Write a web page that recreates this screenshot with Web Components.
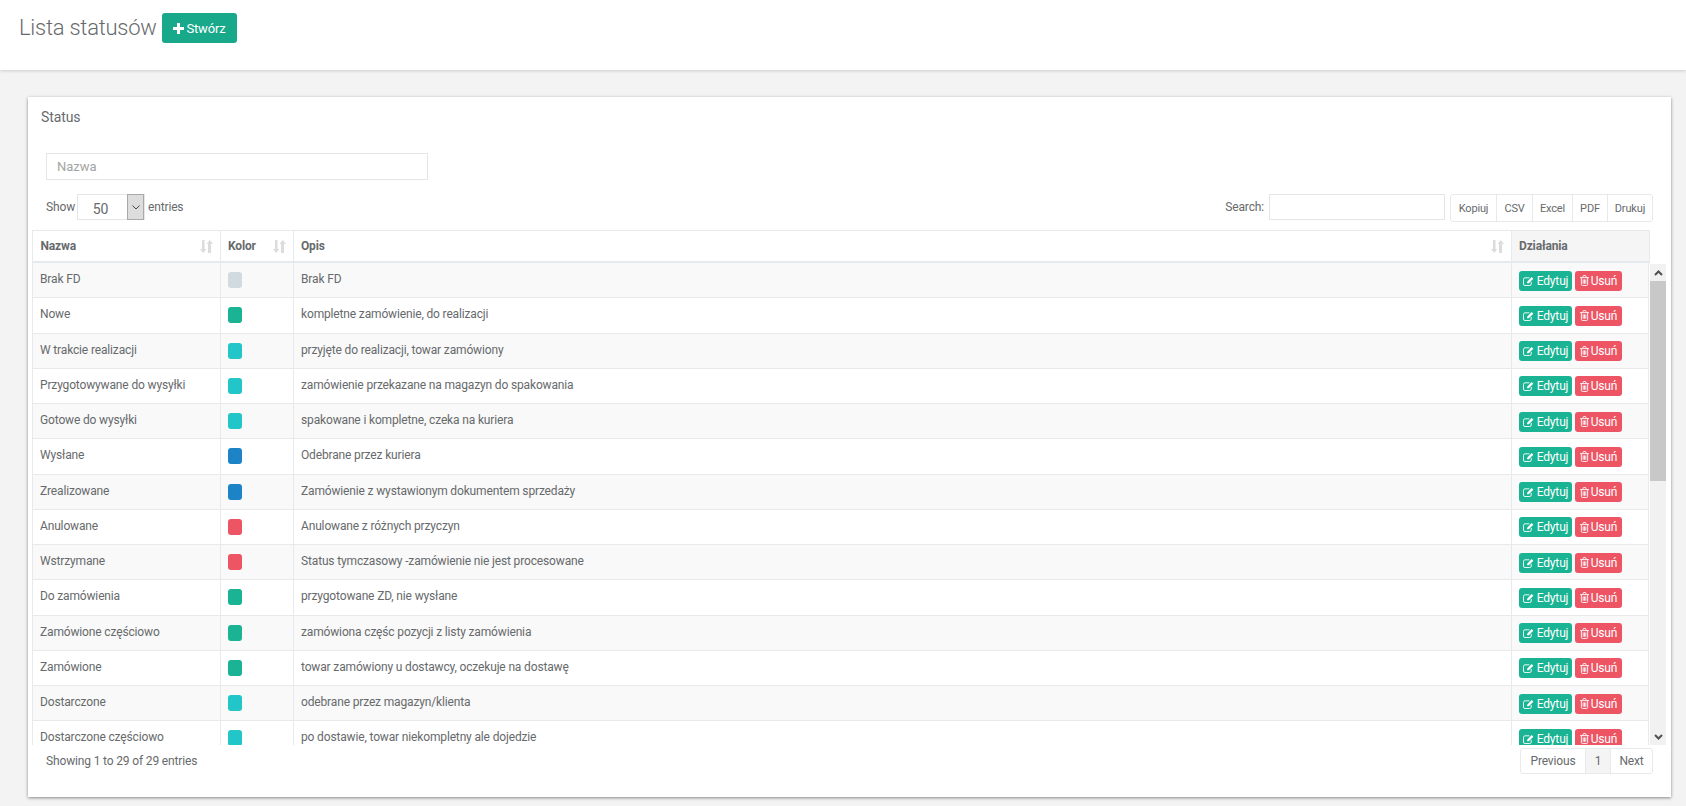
<!DOCTYPE html>
<html lang="pl">
<head>
<meta charset="utf-8">
<title>Lista statusów</title>
<style>
  html, body { margin: 0; height: 100%; overflow: hidden; }
  body { background: #f3f3f4; font-family: Roboto, "Open Sans", sans-serif; font-size: 12px; letter-spacing: -0.15px; color: #676a6c; }
</style>
</head>
<body>
<status-page></status-page>

<script>
const ICONS = {
  plus: '<svg width="11" height="11" viewBox="0 0 11 11"><path fill="currentColor" d="M4 0h3v4h4v3H7v4H4V7H0V4h4z"/></svg>',
  edit: '<svg width="11" height="10" viewBox="0 0 12 11"><path fill="none" stroke="currentColor" stroke-width="1" d="M9 6.500v2.300A1.700 1.700 0 0 1 7.300 10.500H2.200A1.700 1.700 0 0 1 .5 8.800V3.700A1.700 1.700 0 0 1 2.200 2H7"/><path fill="currentColor" d="M4.500 6.200 9.500 1.200 11.300 3 6.300 8H4.500z"/></svg>',
  trash: '<svg width="9" height="11" viewBox="0 0 10 12"><path fill="none" stroke="currentColor" stroke-width="1" d="M0 2.800h10M1.500 2.800v7.700c0 .6.400 1 1 1h5c.6 0 1-.4 1-1V2.800M3.300 2.800V1.300c0-.4.300-.8.800-.8h1.800c.5 0 .8.400.8.800v1.500M3.500 4.800v4.800M5 4.800v4.800M6.500 4.800v4.800"/></svg>',
  sort: '<svg width="13" height="13" viewBox="0 0 13 13"><path fill="#dcdcdc" d="M2 0h2.500v9H6.300L3.250 13 0 9h2zM8 13V4H6.500L9.750 0 13 4h-2v9z"/></svg>'
};

class ActionButton extends HTMLElement {
  constructor() {
    super();
    const icon = ICONS[this.getAttribute('icon')] || '';
    this.attachShadow({ mode: 'open' }).innerHTML = `
      <style>
        :host { display: inline-flex; align-items: center; justify-content: center; gap: var(--gap, 3px);
          box-sizing: border-box; border-radius: 3px; color: #fff; background: var(--bg, #1ab394);
          height: var(--h, 20px); width: var(--w, auto); font-size: var(--fs, 12px); white-space: nowrap; }
        svg { display: block; }
      </style>${icon}<slot></slot>`;
  }
}
customElements.define('action-button', ActionButton);

class TopBar extends HTMLElement {
  constructor() {
    super();
    this.attachShadow({ mode: 'open' }).innerHTML = `
      <style>
        :host { display: flex; align-items: flex-start; gap: 6px; box-sizing: border-box; height: 70px;
          padding: 13px 0 0 19px; background: #fff; box-shadow: 0 1px 3px rgba(0,0,0,.16); position: relative; }
        h2 { margin: 0; width: 137px; white-space: nowrap; font: 300 22px/30px Roboto, sans-serif; color: #676a6c; letter-spacing: -.25px; }
        action-button { --w: 75px; --h: 30px; --fs: 13px; --gap: 2px; --bg: #18a98b; }
      </style>
      <h2>Lista statusów</h2>
      <action-button icon="plus">Stwórz</action-button>`;
  }
}
customElements.define('top-bar', TopBar);

class StatusRow extends HTMLElement {
  constructor() {
    super();
    const name = this.getAttribute('name');
    const color = this.getAttribute('color');
    const desc = this.getAttribute('desc');
    this.attachShadow({ mode: 'open' }).innerHTML = `
      <style>
        :host { display: grid; grid-template-columns: 188px 73px 1218px 138px; box-sizing: border-box;
          height: 35.25px; border-bottom: 1px solid #e7eaec; }
        :host(:nth-child(odd)) { background: #f9f9f9; }
        div { display: flex; align-items: center; box-sizing: border-box; padding: 0 0 2px 7px;
          border-left: 1px solid #e7eaec; white-space: nowrap; }
        div:first-child { padding-left: 7.500px; }
        .actions { gap: 3px; padding: 1px 0 0 7px; border-right: 1px solid #e7eaec; }
        i { display: block; width: 14px; height: 16px; border-radius: 3px; background: ${color}; margin-top: 2px; }
        .edit { --w: 53px; }
        .del { --w: 47px; --bg: #ed5565; --gap: 2px; }
      </style>
      <div>${name}</div>
      <div><i></i></div>
      <div>${desc}</div>
      <div class="actions">
        <action-button class="edit" icon="edit">Edytuj</action-button>
        <action-button class="del" icon="trash">Usuń</action-button>
      </div>`;
  }
}
customElements.define('status-row', StatusRow);

class FakeScrollbar extends HTMLElement {
  constructor() {
    super();
    this.attachShadow({ mode: 'open' }).innerHTML = `
      <style>
        :host { display: flex; flex-direction: column; flex: none; width: 16px; background: #f1f1f1; }
        span { display: flex; align-items: center; justify-content: center; height: 17px; flex: none; }
        .thumb { height: 200px; background: #c8c8c8; }
        .fill { flex: 1; }
      </style>
      <span><svg width="9" height="6" viewBox="0 0 9 6"><path fill="none" stroke="#505050" stroke-width="2" d="M1 5l3.500-3.500L8 5"/></svg></span>
      <div class="thumb"></div>
      <div class="fill"></div>
      <span><svg width="9" height="6" viewBox="0 0 9 6"><path fill="none" stroke="#505050" stroke-width="2" d="M1 1l3.500 3.500L8 1"/></svg></span>`;
  }
}
customElements.define('fake-scrollbar', FakeScrollbar);

const rows = [
  ['Brak FD', '#d1dade', 'Brak FD'],
  ['Nowe', '#1ab394', 'kompletne zamówienie, do realizacji'],
  ['W trakcie realizacji', '#23c6c8', 'przyjęte do realizacji, towar zamówiony'],
  ['Przygotowywane do wysyłki', '#23c6c8', 'zamówienie przekazane na magazyn do spakowania'],
  ['Gotowe do wysyłki', '#23c6c8', 'spakowane i kompletne, czeka na kuriera'],
  ['Wysłane', '#1c84c6', 'Odebrane przez kuriera'],
  ['Zrealizowane', '#1c84c6', 'Zamówienie z wystawionym dokumentem sprzedaży'],
  ['Anulowane', '#ed5565', 'Anulowane z różnych przyczyn'],
  ['Wstrzymane', '#ed5565', 'Status tymczasowy -zamówienie nie jest procesowane'],
  ['Do zamówienia', '#1ab394', 'przygotowane ZD, nie wysłane'],
  ['Zamówione częściowo', '#1ab394', 'zamówiona częśc pozycji z listy zamówienia'],
  ['Zamówione', '#1ab394', 'towar zamówiony u dostawcy, oczekuje na dostawę'],
  ['Dostarczone', '#23c6c8', 'odebrane przez magazyn/klienta'],
  ['Dostarczone częściowo', '#23c6c8', 'po dostawie, towar niekompletny ale dojedzie']
];

class StatusTable extends HTMLElement {
  constructor() {
    super();
    const body = rows.map(r => `<status-row name="${r[0]}" color="${r[1]}" desc="${r[2]}"></status-row>`).join('');
    this.attachShadow({ mode: 'open' }).innerHTML = `
      <style>
        :host { display: block; width: 1635px; }
        .head { display: grid; grid-template-columns: 188px 73px 1218px 139px; width: 1618px; box-sizing: border-box;
          height: 33px; border-top: 1px solid #e7eaec; border-bottom: 2px solid #e7eaec; font-weight: 700; }
        .head div { display: flex; align-items: center; justify-content: space-between; box-sizing: border-box;
          padding: 0 7px; border-left: 1px solid #e7eaec; }
        .head div:first-child { padding-left: 7.500px; }
        .head .last { background: #f5f5f6; border-right: 1px solid #e7eaec; }
        .wrap { display: flex; gap: 1px; height: 482px; }
        .rows { flex: none; width: 1617px; overflow: hidden; }
        fake-scrollbar { margin-top: 1px; }
      </style>
      <div class="head">
        <div>Nazwa${ICONS.sort}</div>
        <div>Kolor${ICONS.sort}</div>
        <div>Opis${ICONS.sort}</div>
        <div class="last">Działania</div>
      </div>
      <div class="wrap">
        <div class="rows">${body}</div>
        <fake-scrollbar></fake-scrollbar>
      </div>`;
  }
}
customElements.define('status-table', StatusTable);

class StatusCard extends HTMLElement {
  constructor() {
    super();
    this.attachShadow({ mode: 'open' }).innerHTML = `
      <style>
        :host { display: block; box-sizing: border-box; width: 1643px; height: 700px; margin: 27px 0 0 28px;
          padding: 11px 18px 0 4px; background: #fff; box-shadow: 0 1px 3px rgba(0,0,0,.45); }
        h5 { margin: 0 0 0 9px; font: 400 14px/18px Roboto, sans-serif; color: #676a6c; letter-spacing: -.1px; }
        .filter { display: block; box-sizing: border-box; width: 382px; height: 27px; margin: 27px 0 14px 14px;
          padding: 0 10px; border: 1px solid #e5e6e7; font: 13px Roboto, sans-serif; color: #676a6c; outline: 0; }
        .filter::placeholder { color: #a4a4a4; opacity: 1; }
        .tools { display: flex; align-items: flex-start; justify-content: space-between; height: 36px; padding: 0 0 0 14px; }
        .show, .search { display: flex; align-items: center; height: 26px; }
        .show { gap: 2px; }
        .show .entries { margin-left: 1px; }
        .select { display: flex; box-sizing: border-box; width: 68px; height: 26px; border: 1px solid #e5e6e7;
          font-size: 14px; letter-spacing: 0; }
        .select b { flex: 1; font-weight: 400; text-align: center; line-height: 28px; padding-right: 4px; }
        .select span { display: flex; align-items: center; justify-content: center; width: 17px; background: #ddd;
          border: 1px solid #a9a9a9; margin: -1px 0; box-sizing: border-box; }
        .right { display: flex; align-items: flex-start; gap: 5px; }
        .search { gap: 5px; }
        .search input { box-sizing: border-box; width: 176px; height: 26px; border: 1px solid #e5e6e7; outline: 0; margin: 0; }
        .group { display: flex; box-sizing: border-box; height: 28px; border: 1px solid #e7eaec; border-radius: 3px; font-size: 11px; }
        .group span { display: flex; align-items: center; justify-content: center; box-sizing: border-box; border-left: 1px solid #e7eaec; }
        .group span:first-child { border-left: 0; }
        .foot { display: flex; justify-content: space-between; align-items: flex-start; padding: 3px 0 0 14px; }
        .info { padding-top: 6px; }
        .pages { display: flex; box-sizing: border-box; height: 26px; border: 1px solid #e7eaec; border-radius: 3px; }
        .pages span { display: flex; align-items: center; justify-content: center; box-sizing: border-box; border-left: 1px solid #e7eaec; }
        .pages span:first-child { border-left: 0; width: 64px; }
        .pages .cur { width: 25px; background: #f4f4f4; }
        .pages span:last-child { width: 42px; }
      </style>
      <h5>Status</h5>
      <input class="filter" placeholder="Nazwa">
      <div class="tools">
        <div class="show">Show
          <div class="select"><b>50</b><span><svg width="8" height="5" viewBox="0 0 8 5"><path fill="none" stroke="#444" d="M.5.5 4 4 7.500.5"/></svg></span></div>
          <span class="entries">entries</span></div>
        <div class="right">
          <div class="search">Search: <input></div>
          <div class="group">
            <span style="width:45px">Kopiuj</span><span style="width:36px">CSV</span><span style="width:40px">Excel</span><span style="width:35px">PDF</span><span style="width:45px">Drukuj</span>
          </div>
        </div>
      </div>
      <status-table></status-table>
      <div class="foot">
        <div class="info">Showing 1 to 29 of 29 entries</div>
        <div class="pages"><span>Previous</span><span class="cur">1</span><span>Next</span></div>
      </div>`;
  }
}
customElements.define('status-card', StatusCard);

class StatusPage extends HTMLElement {
  constructor() {
    super();
    this.attachShadow({ mode: 'open' }).innerHTML = `
      <style>:host { display: block; }</style>
      <top-bar></top-bar>
      <status-card></status-card>`;
  }
}
customElements.define('status-page', StatusPage);
</script>
</body>
</html>
